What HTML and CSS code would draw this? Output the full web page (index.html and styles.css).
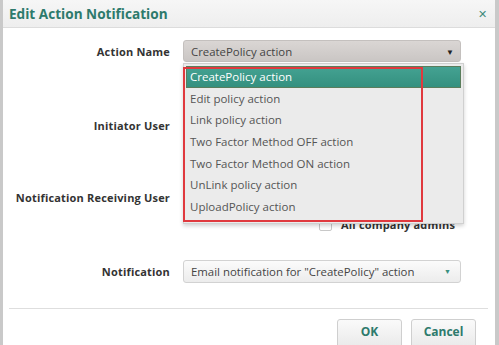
FILE: index.html
```html
<!DOCTYPE html>
<html>
<head>
<meta charset="utf-8">
<link rel="stylesheet" href="styles.css">
</head>
<body>
<div class="dialog">
  <div class="titlebar">
    <span class="title">Edit Action Notification</span>
    <span class="close">&#x2715;</span>
  </div>
  <div class="form">
    <div class="row r1">
      <div class="label">Action Name</div>
      <div class="control">
        <div class="select gray"><span>CreatePolicy action</span><span class="arrow dark">&#9660;</span></div>
      </div>
    </div>
    <div class="row r2">
      <div class="label">Initiator User</div>
      <div class="control"></div>
    </div>
    <div class="row r3">
      <div class="label">Notification Receiving User</div>
      <div class="control"></div>
    </div>
    <div class="checkrow">
      <span class="checkbox"></span><span class="checklabel">All company admins</span>
    </div>
    <div class="row r4">
      <div class="label">Notification</div>
      <div class="control">
        <div class="select light"><span>Email notification for "CreatePolicy" action</span><span class="arrow teal">&#9660;</span></div>
      </div>
    </div>
    <div class="footer">
      <button class="btn ok">OK</button>
      <button class="btn">Cancel</button>
    </div>
    <ul class="dropdown">
      <li class="active">CreatePolicy action</li>
      <li>Edit policy action</li>
      <li>Link policy action</li>
      <li>Two Factor Method OFF action</li>
      <li>Two Factor Method ON action</li>
      <li>UnLink policy action</li>
      <li>UploadPolicy action</li>
    </ul>
    <div class="annotation"></div>
  </div>
</div>
</body>
</html>
```
FILE: styles.css
```css
html, body {
  margin: 0;
  padding: 0;
}
body {
  background: #c9c9c9;
  width: 499px;
  height: 345px;
  overflow: hidden;
  font-family: "Open Sans", "Liberation Sans", sans-serif;
}
.dialog {
  margin-left: 3px;
  width: 492px;
  height: 345px;
  background: #ffffff;
  overflow: hidden;
}
.titlebar {
  height: 27px;
  background: linear-gradient(#f6f6f6, #eeeeee);
  border-bottom: 1px solid #dcdcdc;
  display: flex;
  align-items: center;
  justify-content: space-between;
  padding: 0 8px 0 6px;
}
.title {
  font-weight: 700;
  font-size: 13.6px;
  color: #2d7a6c;
}
.close {
  font-size: 11px;
  color: #3f8a7c;
  margin-top: -1px;
}
.form {
  position: relative;
  padding-top: 12px;
}
.row {
  display: flex;
  align-items: center;
}
.label {
  width: 167px;
  text-align: right;
  font-weight: 700;
  font-size: 11px;
  letter-spacing: 0.18px;
  color: #333333;
  padding-right: 13px;
}
.control {
  width: 278px;
}
.r1 { height: 22px; }
.r2 { height: 40px; margin-top: 43px; }
.r3 { height: 40px; margin-top: 32px; }
.checkrow {
  display: flex;
  align-items: center;
  height: 13px;
  margin-top: 1px;
  padding-left: 316px;
  gap: 9px;
}
.checkbox {
  width: 11px;
  height: 11px;
  border: 1px solid #c8c8c8;
  border-radius: 2px;
  background: #fff;
}
.checklabel {
  font-weight: 700;
  font-size: 11px;
  letter-spacing: 0.18px;
  color: #333;
}
.r4 { height: 23px; margin-top: 29px; }
.select {
  border-radius: 3px;
  display: flex;
  align-items: center;
  justify-content: space-between;
  padding: 0 6px 0 7px;
  font-size: 11.4px;
  color: #444;
  box-sizing: border-box;
}
.select.gray {
  height: 22px;
  background: linear-gradient(#dad6d4, #cac6c4);
  border: 1px solid #c4c0be;
}
.select.light {
  height: 23px;
  background: linear-gradient(#fbfbfb, #ececec);
  border: 1px solid #d2d2d2;
  padding-right: 9px;
}
.arrow.dark {
  font-size: 8px;
  color: #222;
}
.arrow.teal {
  font-size: 7px;
  color: #3a8f7f;
}
.footer {
  margin: 25px 7px 0 6px;
  border-top: 1px solid #dedede;
  padding-top: 10px;
  display: flex;
  justify-content: flex-end;
  gap: 9px;
  padding-right: 12px;
}
.btn {
  width: 65px;
  height: 30px;
  border: 1px solid #cfcfcf;
  border-radius: 3px;
  background: linear-gradient(#fafafa, #e9e9e9);
  font-family: "Open Sans", "Liberation Sans", sans-serif;
  font-weight: 700;
  font-size: 12px;
  color: #2d7a6c;
  padding: 0 0 6px 0;
  margin: 0;
}
.dropdown {
  position: absolute;
  left: 180px;
  top: 35px;
  width: 275px;
  margin: 0;
  padding: 2px 2px 5px 2px;
  list-style: none;
  background: #ebebeb;
  border: 1px solid #d0d0d0;
  box-shadow: 0 2px 4px rgba(0, 0, 0, 0.18);
}
.dropdown li {
  height: 21.7px;
  line-height: 21.7px;
  padding-left: 4px;
  font-size: 11.5px;
  color: #555;
  box-sizing: border-box;
}
.dropdown li.active {
  background: linear-gradient(#44a292, #34907f);
  border: 1px solid #5a7d5c;
  color: #fff;
  line-height: 19.7px;
  padding-left: 3px;
}
.annotation {
  position: absolute;
  left: 180px;
  top: 39px;
  width: 236px;
  height: 151px;
  border: 2px solid #e0393e;
}
```
